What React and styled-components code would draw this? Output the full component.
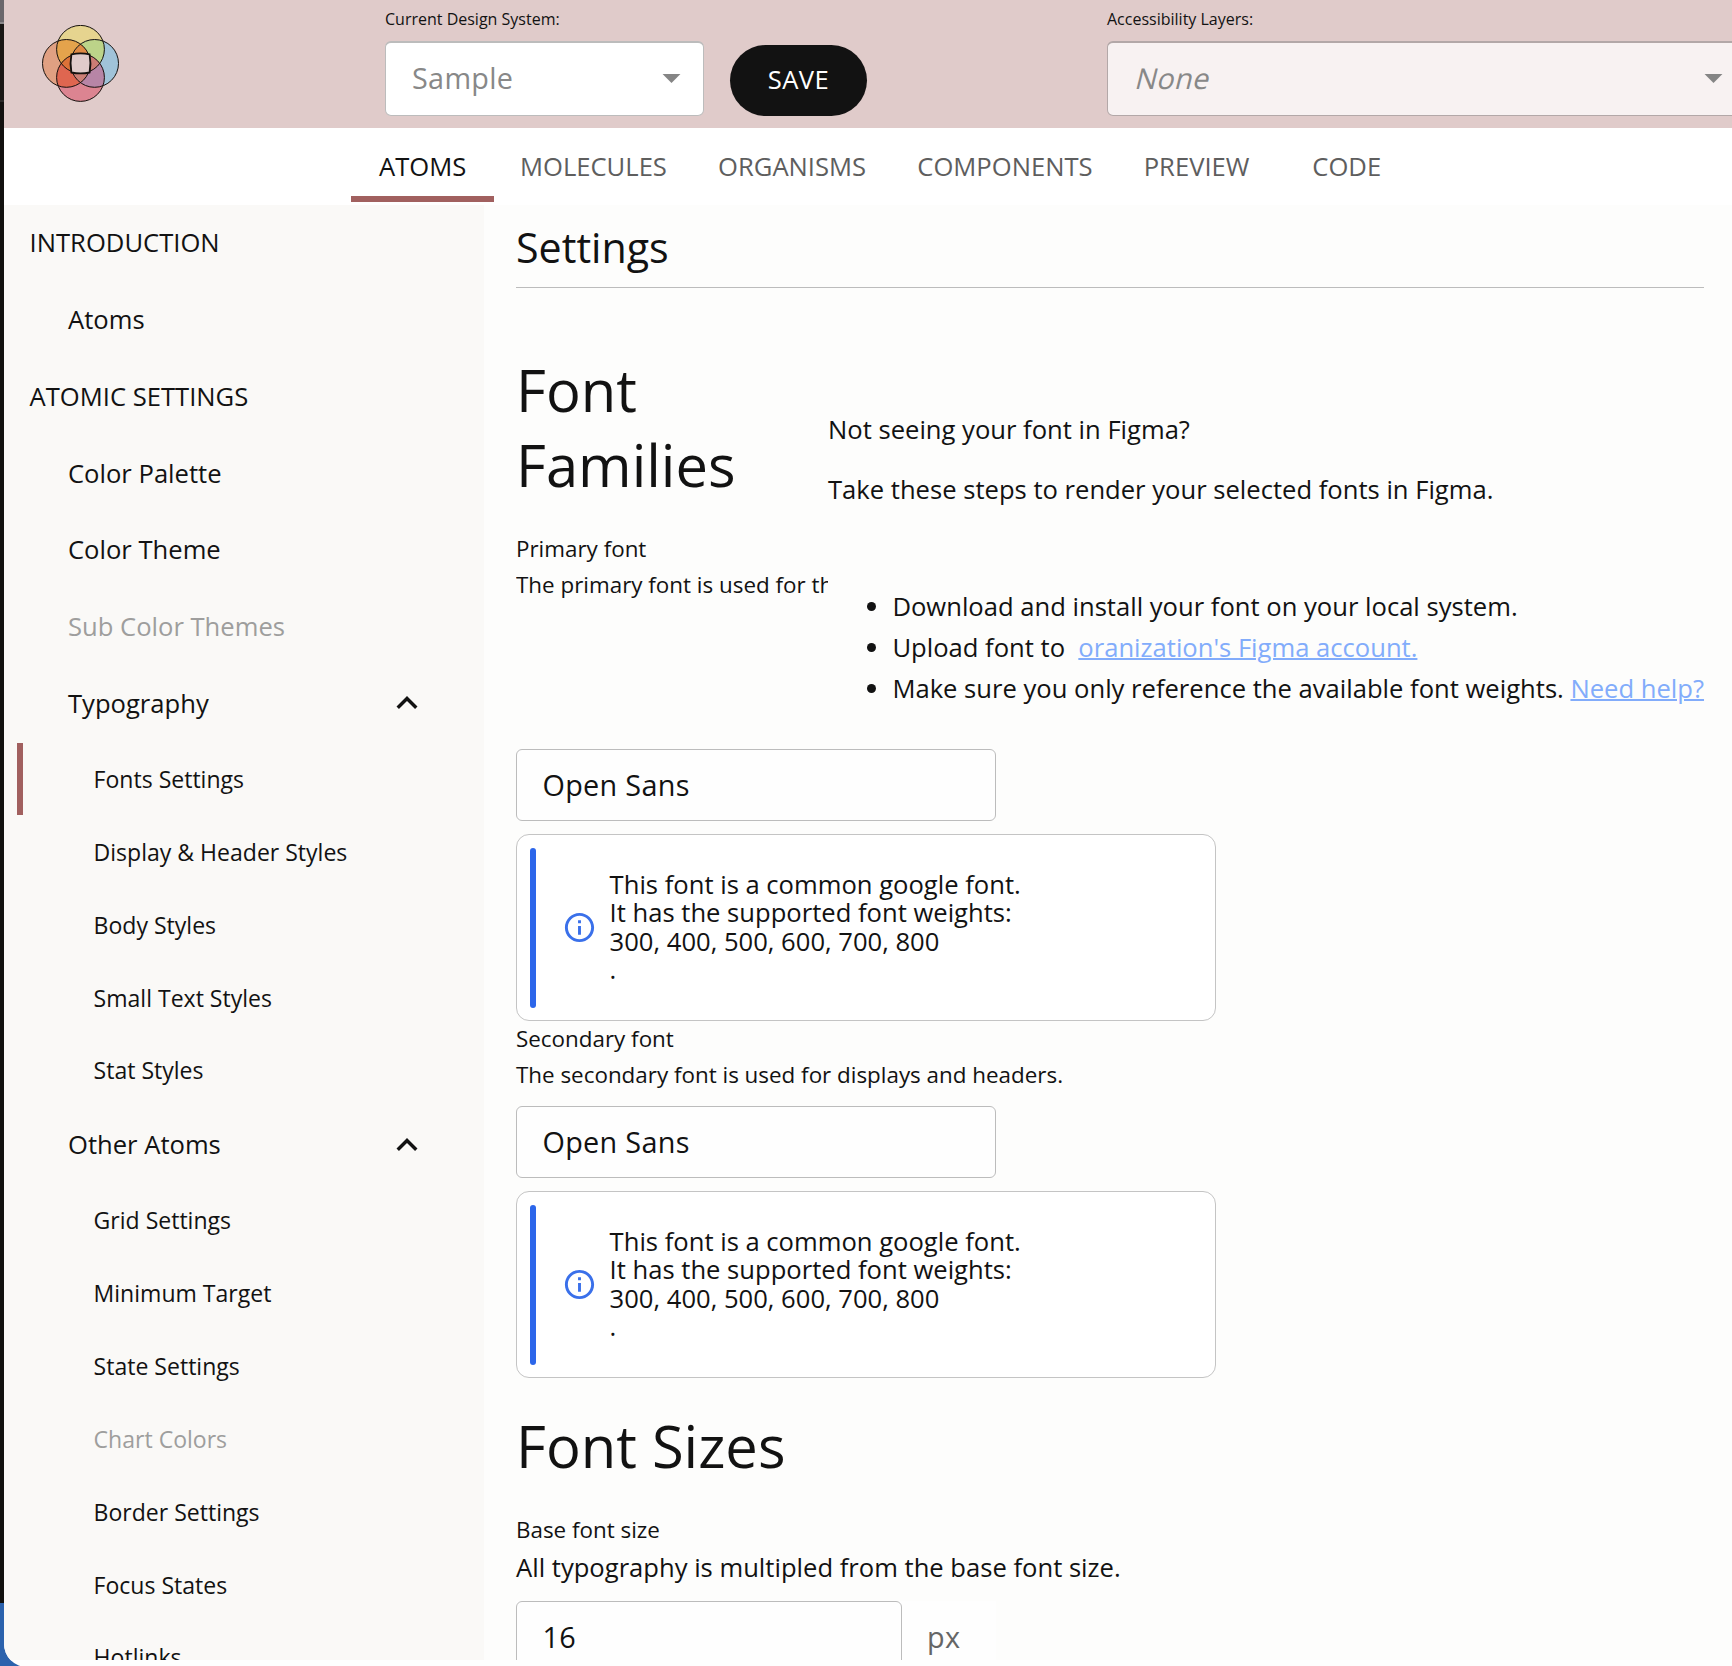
import React from "react";
import styled, { createGlobalStyle, css } from "styled-components";

const ink = "#121212";
const accent = "#a1605f";
const line = "#bcbcbc";

const GlobalStyle = createGlobalStyle`
  *, *::before, *::after { box-sizing: border-box; }
  body {
    margin: 0;
    overflow: hidden;
    color: ${ink};
    font-family: "Open Sans", "Noto Sans", sans-serif;
  }
  h1, h2, p, ul { margin: 0; padding: 0; font-weight: 400; }
`;

const Desktop = styled.div`
  display: flex;
  width: 1732px;
  height: 1666px;
  padding-left: 4px;
  overflow: hidden;
  background: linear-gradient(
    #6a676b 0 22px, #8b898b 22px 24px, #191715 24px 100px, #2c2a29 100px 102px,
    #12110f 102px 1603px, #2b62ad 1603px
  );
`;

const Window = styled.div`
  display: flex;
  flex-direction: column;
  width: 1728px;
  height: 1667px;
  overflow: hidden;
  background: #fefefe;
  border-bottom-left-radius: 23px;
`;

const Header = styled.header`
  display: flex;
  flex: none;
  height: 128px;
  padding-left: 38px;
  background: #e0cbca;
`;

const Brand = styled.div`
  flex: none;
  width: 343px;
  padding-top: 25px;
  svg { display: block; }
`;

const Field = styled.div`
  flex: none;
  width: ${(p) => p.$width}px;
  margin-right: ${(p) => p.$after || 0}px;
`;

const FieldLabel = styled.label`
  display: block;
  height: 41px;
  padding-top: 8px;
  font-size: 16px;
  line-height: 22px;
`;

const Select = styled.div`
  display: flex;
  align-items: center;
  justify-content: space-between;
  height: 75px;
  padding: 0 10px 4px 26px;
  border: 1px solid ${(p) => (p.$muted ? "#b3a8a8" : "#bcbcbc")};
  border-top-width: 2px;
  border-radius: 6px;
  background: ${(p) => (p.$muted ? "#f8f2f2" : "#fff")};
  color: #888;
  font-size: 28.8px;
  letter-spacing: 0.3px;
`;

const Slanted = styled.span`
  display: inline-block;
  transform: skewX(-14deg);
  transform-origin: 50% 78%;
`;

const SaveButton = styled.button`
  flex: none;
  width: 137px;
  height: 71px;
  margin: 45px 240px 0 0;
  padding: 0 0 3px;
  border: 0;
  border-radius: 36px;
  background: ${ink};
  color: #fff;
  font: 400 25.6px "Open Sans", sans-serif;
  letter-spacing: 0.4px;
`;

const Tabs = styled.nav`
  display: flex;
  flex: none;
  height: 77px;
  padding: 0 0 3px 347px;
  background: #fff;
`;

const Tab = styled.a`
  display: flex;
  align-items: center;
  justify-content: center;
  min-width: 143.4px;
  padding: 8px 25.6px 0;
  border-bottom: 6px solid ${(p) => (p.$active ? accent : "transparent")};
  color: ${(p) => (p.$active ? ink : "#5e5e5e")};
  font-size: 25.6px;
`;

const Body = styled.div`
  display: flex;
  flex: none;
  height: 1455px;
  overflow: hidden;
`;

const Sidebar = styled.aside`
  flex: none;
  width: 480px;
  background: #faf9f7;
`;

const NavItem = styled.div`
  display: flex;
  align-items: center;
  justify-content: space-between;
  height: 76.8px;
  padding: 0 56.5px 1.4px ${(p) => (p.$section ? 25.6 : 64)}px;
  color: ${(p) => (p.$disabled ? "#9e9e9d" : ink)};
  font-size: 25.6px;
  ${(p) => p.$sub && css`
    height: 72.9px;
    margin-left: 13px;
    padding: 0 0 0.4px 70.6px;
    border-left: 6px solid ${p.$active ? accent : "transparent"};
    font-size: 23.04px;
  `}
`;

const Main = styled.main`
  flex: 1;
  min-width: 0;
  padding: 0 28px 0 32px;
  background: #fdfdfc;
`;

const PageTitle = styled.h1`
  height: 83px;
  padding-top: 2px;
  border-bottom: 1px solid ${line};
  font-size: 41.2px;
  line-height: 80px;
`;

const Families = styled.section`
  display: flex;
  height: 461px;
`;

const FamiliesIntro = styled.div`
  flex: none;
  width: 312px;
  padding-top: 64px;
  overflow: hidden;
`;

const SectionTitle = styled.h2`
  margin: ${(p) => p.$top || 0}px 0 29px;
  font-size: 57.9px;
  line-height: 75px;
`;

const Caption = styled.p`
  font-size: 22.4px;
  line-height: 36px;
  white-space: nowrap;
`;

const BodyText = styled.p`
  margin-top: ${(p) => (p.$tight ? -1 : 0)}px;
  font-size: 25.6px;
  line-height: 41px;
  white-space: nowrap;
`;

const Help = styled.div`
  flex: none;
  display: flex;
  flex-direction: column;
  gap: 19px;
  padding-top: 121px;
`;

const Steps = styled.ul`
  margin-top: 57px;
  padding-left: 64.4px;
  font-size: 25.6px;
  line-height: 41px;
  white-space: nowrap;
`;

const Link = styled.a`
  margin-left: ${(p) => p.$gap || 0}px;
  color: #82acfb;
  text-decoration: underline;
  text-decoration-thickness: 2px;
`;

const Input = styled.div`
  display: flex;
  align-items: center;
  width: ${(p) => p.$width || 480}px;
  height: 72px;
  padding: 0 0 2px 25.5px;
  border: 1px solid ${line};
  border-radius: 6px;
  background: #fefefe;
  font-size: 28.8px;
  letter-spacing: 0.3px;
`;

const UnitRow = styled.div`
  display: flex;
  align-items: center;
  width: 480px;
  margin-top: 13px;
  background: #fefefe;
`;

const Unit = styled.span`
  padding: 0 0 2px 25px;
  color: #666;
  font-size: 28.8px;
  letter-spacing: 0.3px;
`;

const Alert = styled.div`
  display: flex;
  align-items: center;
  width: 700px;
  height: 187px;
  margin-top: 13px;
  padding: 13px;
  border: 1px solid #c4c4c4;
  border-radius: 13px;
  background: #fff;
`;

const AlertBar = styled.div`
  width: 6px;
  height: 160px;
  margin-right: 26px;
  border-radius: 3px;
  background: #2c66ea;
`;

const AlertText = styled.div`
  margin-left: 12.6px;
  font-size: 25.6px;
  line-height: 28.4px;
`;

const SecondInput = styled.div`
  margin-top: 13px;
`;

function Logo() {
  const circles = { t: [38.5, 24.3], l: [24.4, 38.4], r: [52.6, 38.4], b: [38.5, 52.5] };
  const fill = (keys, color) =>
    keys.split("").reduce(
      (node, k) => <g key={keys + k} clipPath={`url(#logo-${k})`}>{node}</g>,
      <rect key={keys} width="77" height="77" fill={color} />
    );
  return (
    <svg width="77" height="77" viewBox="0 0 77 77">
      <defs>
        {Object.entries(circles).map(([k, [cx, cy]]) => (
          <clipPath id={`logo-${k}`} key={k}><circle cx={cx} cy={cy} r="24" /></clipPath>
        ))}
      </defs>
      {fill("t", "#e6d48f")}
      {fill("l", "#e0a082")}
      {fill("r", "#a0c3d9")}
      {fill("b", "#dc8491")}
      {fill("tl", "#e4a34c")}
      {fill("tr", "#bcd389")}
      {fill("lb", "#df6650")}
      {fill("rb", "#b785a6")}
      {fill("tlr", "#e08a45")}
      {fill("tlb", "#dd7238")}
      {fill("trb", "#cc7c74")}
      {fill("lrb", "#cc7f76")}
      {Object.entries(circles).map(([k, [cx, cy]]) => (
        <circle key={k} cx={cx} cy={cy} r="23.9" fill="none" stroke="#16120f" strokeWidth="1" />
      ))}
      <path
        d="M29.4 29.3Q38.5 27.6 47.6 29.3Q49.3 38.4 47.6 47.5Q38.5 49.2 29.4 47.5Q27.7 38.4 29.4 29.3Z"
        fill="#e0cbca" stroke="#16120f" strokeWidth="1.8"
      />
    </svg>
  );
}

const Caret = () => (
  <svg width="43" height="43" viewBox="0 0 24 24"><path d="M7 10l5 5 5-5z" fill="#858585" /></svg>
);

const Chevron = () => (
  <svg width="42" height="42" viewBox="0 0 24 24">
    <path d="M12 8l-6 6 1.41 1.41L12 10.83l4.59 4.58L18 14z" fill={ink} />
  </svg>
);

const InfoIcon = () => (
  <svg width="35" height="35" viewBox="0 0 24 24">
    <path
      fill="#3a70ea"
      d="M11 7h2v2h-2zm0 4h2v6h-2zm1-9C6.48 2 2 6.48 2 12s4.48 10 10 10 10-4.48 10-10S17.52 2 12 2m0 18c-4.41 0-8-3.59-8-8s3.59-8 8-8 8 3.59 8 8-3.59 8-8 8"
    />
  </svg>
);

const FontNotice = () => (
  <Alert>
    <AlertBar />
    <InfoIcon />
    <AlertText>
      <div>This font is a common google font.</div>
      <div>It has the supported font weights:</div>
      <div>300, 400, 500, 600, 700, 800</div>
      <div>.</div>
    </AlertText>
  </Alert>
);

const tabs = ["ATOMS", "MOLECULES", "ORGANISMS", "COMPONENTS", "PREVIEW", "CODE"];

const navigation = [
  { label: "INTRODUCTION", section: true },
  { label: "Atoms" },
  { label: "ATOMIC SETTINGS", section: true },
  { label: "Color Palette" },
  { label: "Color Theme" },
  { label: "Sub Color Themes", disabled: true },
  { label: "Typography", open: true },
  { label: "Fonts Settings", sub: true, active: true },
  { label: "Display & Header Styles", sub: true },
  { label: "Body Styles", sub: true },
  { label: "Small Text Styles", sub: true },
  { label: "Stat Styles", sub: true },
  { label: "Other Atoms", open: true },
  { label: "Grid Settings", sub: true },
  { label: "Minimum Target", sub: true },
  { label: "State Settings", sub: true },
  { label: "Chart Colors", sub: true, disabled: true },
  { label: "Border Settings", sub: true },
  { label: "Focus States", sub: true },
  { label: "Hotlinks", sub: true },
];

export default function App() {
  return (
    <Desktop>
      <GlobalStyle />
      <Window>
        <Header>
          <Brand><Logo /></Brand>
          <Field $width={319} $after={26}>
            <FieldLabel>Current Design System:</FieldLabel>
            <Select>Sample<Caret /></Select>
          </Field>
          <SaveButton>SAVE</SaveButton>
          <Field $width={639}>
            <FieldLabel>Accessibility Layers:</FieldLabel>
            <Select $muted><Slanted>None</Slanted><Caret /></Select>
          </Field>
        </Header>
        <Tabs>
          {tabs.map((t, i) => <Tab key={t} $active={i === 0}>{t}</Tab>)}
        </Tabs>
        <Body>
          <Sidebar>
            {navigation.map((n) => (
              <NavItem key={n.label} $section={n.section} $sub={n.sub} $active={n.active} $disabled={n.disabled}>
                <span>{n.label}</span>
                {n.open && <Chevron />}
              </NavItem>
            ))}
          </Sidebar>
          <Main>
            <PageTitle>Settings</PageTitle>
            <Families>
              <FamiliesIntro>
                <SectionTitle>Font<br />Families</SectionTitle>
                <Caption>Primary font</Caption>
                <Caption>The primary font is used for the</Caption>
              </FamiliesIntro>
              <Help>
                <BodyText>Not seeing your font in Figma?</BodyText>
                <BodyText>Take these steps to render your selected fonts in Figma.</BodyText>
                <Steps>
                  <li>Download and install your font on your local system.</li>
                  <li>Upload font to <Link $gap={6.6}>oranization's Figma account.</Link></li>
                  <li>Make sure you only reference the available font weights. <Link>Need help?</Link></li>
                </Steps>
              </Help>
            </Families>
            <Input>Open Sans</Input>
            <FontNotice />
            <Caption>Secondary font</Caption>
            <Caption>The secondary font is used for displays and headers.</Caption>
            <SecondInput><Input>Open Sans</Input></SecondInput>
            <FontNotice />
            <SectionTitle $top={30}>Font Sizes</SectionTitle>
            <Caption>Base font size</Caption>
            <BodyText $tight>All typography is multipled from the base font size.</BodyText>
            <UnitRow>
              <Input $width={386}>16</Input>
              <Unit>px</Unit>
            </UnitRow>
          </Main>
        </Body>
      </Window>
    </Desktop>
  );
}
